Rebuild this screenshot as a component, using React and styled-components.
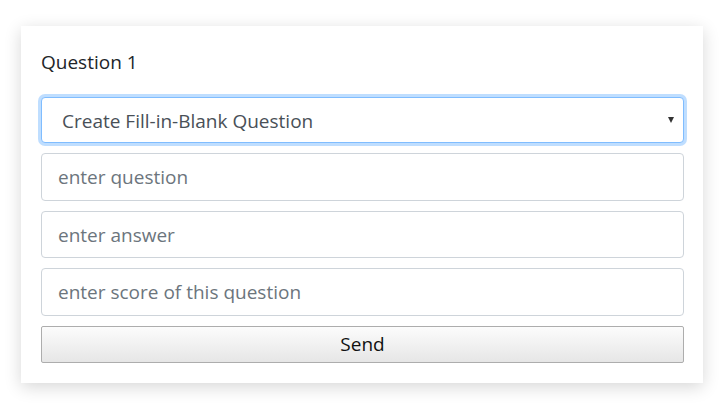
import React from 'react';
import styled, { createGlobalStyle } from 'styled-components';

const GlobalStyle = createGlobalStyle`
  body {
    margin: 0;
    background: #fff;
    font-family: "Open Sans", "Noto Sans", sans-serif;
  }
`

const Page = styled.div`
  padding: 26px 20px 20px 21px;
`
const Card = styled.div`
  background: #fff;
  box-shadow: 0 4px 16px rgba(0, 0, 0, 0.16);
  padding: 20px 19px 20px 20px;
  display: flex;
  flex-direction: column;
`
const Title = styled.div`
  font-size: 19px;
  color: #212529;
  line-height: 32px;
  margin-bottom: 19px;
  font-family: "Open Sans", sans-serif;
`
const Fields = styled.div`
  display: flex;
  flex-direction: column;
  gap: 10px;
`
const SelectWrap = styled.div`
  position: relative;
`
const Select = styled.select`
  appearance: none;
  width: 100%;
  box-sizing: border-box;
  height: 46px;
  padding: 2px 20px 0;
  font-family: "Open Sans", sans-serif;
  font-size: 19px;
  color: #495057;
  background: #fff;
  border: 1px solid #80bdff;
  border-radius: 4px;
  box-shadow: 0 0 0 3px rgba(0, 123, 255, 0.25);
  outline: none;
`
const Caret = styled.span`
  position: absolute;
  right: 10px;
  top: 50%;
  transform: translateY(-50%);
  width: 0;
  height: 0;
  border-left: 3.5px solid transparent;
  border-right: 3.5px solid transparent;
  border-top: 6px solid #333;
  pointer-events: none;
`
const Input = styled.input`
  width: 100%;
  box-sizing: border-box;
  height: 47.5px;
  padding: 1px 16px 0;
  font-family: "Open Sans", sans-serif;
  font-size: 19px;
  color: #495057;
  border: 1px solid #ced4da;
  border-radius: 4px;
  outline: none;
  &::placeholder {
    color: #6c757d;
  }
`
const Button = styled.button`
  width: 100%;
  height: 37px;
  font-family: "Open Sans", sans-serif;
  font-size: 19px;
  color: #111;
  background: linear-gradient(#fcfcfc, #e6e6e6);
  border: 1px solid #adadad;
  border-radius: 2px;
  padding: 0;
`

export default function App() {
  return (
    <Page>
      <GlobalStyle />
      <Card>
        <Title>Question 1</Title>
        <Fields>
          <SelectWrap>
            <Select defaultValue="fill">
              <option value="fill">Create Fill-in-Blank Question</option>
            </Select>
            <Caret />
          </SelectWrap>
          <Input placeholder="enter question" />
          <Input placeholder="enter answer" />
          <Input placeholder="enter score of this question" />
          <Button>Send</Button>
        </Fields>
      </Card>
    </Page>
  );
}
